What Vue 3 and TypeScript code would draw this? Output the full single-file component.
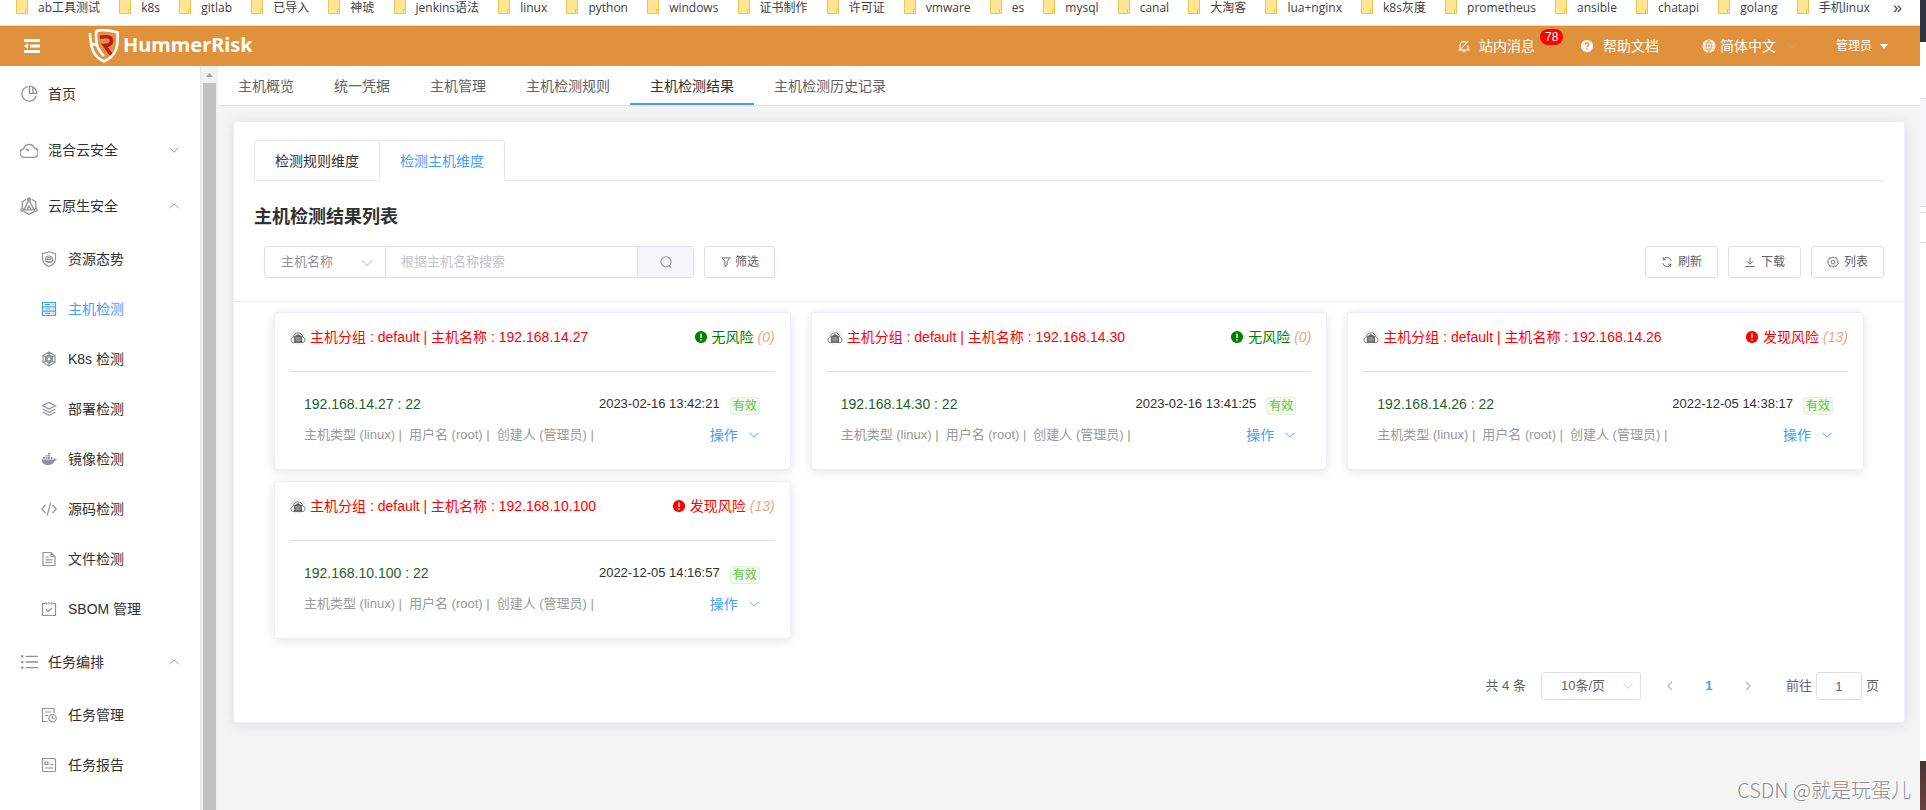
<script setup lang="ts">
import { ref } from 'vue'

interface Icon { stroke?: string; fill?: string }
interface MenuItem { label: string; icon: string; level: 1 | 2; arrow?: 'up' | 'down'; active?: boolean }
interface Host { ip: string; time: string; count: number }

const bookmarks = [
  'ab工具测试', 'k8s', 'gitlab', '已导入', '神琥', 'jenkins语法', 'linux', 'python', 'windows', '证书制作',
  '许可证', 'vmware', 'es', 'mysql', 'canal', '大淘客', 'lua+nginx', 'k8s灰度', 'prometheus', 'ansible',
  'chatapi', 'golang', '手机linux',
]

const icons: Record<string, Icon> = {
  pie: { stroke: 'M7 1.500a6.500 6.500 0 1 0 7.500 8M8.500 1v6.500H15A6.500 6.500 0 0 0 8.500 1zM11.500 2v5.500' },
  cloud: { stroke: 'M3.500 14.500a3.800 3.800 0 0 1-.3-7.500A5 5 0 0 1 12.700 6.200 4.200 4.200 0 0 1 12.500 14.500zM5 7.300a4 4 0 0 1 3 1.500' },
  native: { stroke: 'M5.500 2L2 4.500M10.500 2L14 4.500v6M2 4.500v6M3.500 13 8 15.500l4.500-2.500M8 2.500l4.500 9h-9zM8 .8a1.200 1.200 0 1 0 0 2.400A1.200 1.200 0 0 0 8 .8zM2 10.300a1.200 1.200 0 1 0 0 2.400 1.200 1.200 0 0 0 0-2.400zM14 10.300a1.200 1.200 0 1 0 0 2.400 1.200 1.200 0 0 0 0-2.400zM6 11.500 8 8l2 3.500' },
  shield: { stroke: 'M8 .8l6.500 2v5c0 3.700-2.700 6.300-6.500 7.700-3.800-1.400-6.500-4-6.500-7.700v-5zM4.500 8.500a3.500 3.500 0 0 1 7 0v1.500a5 5 0 0 1-7 0zM6 8.500a2 2 0 0 1 4 0zM6 10.500h4' },
  server: { stroke: 'M1.500 1.500h13v13h-13zM1.500 5.800h13M1.500 10.200h13M4 3.700h5M4 8h5M4 12.300h5M11.500 3.700h1M11.500 8h1M11.500 12.300h1' },
  k8s: { stroke: 'M8 1l6 3.500v7L8 15l-6-3.500v-7zM8 1v3M8 12v3M2 4.500 5 6M14 4.500 11 6M2 11.500 5 10M14 11.500 11 10', fill: 'M8 3.200l4.200 2.400v4.800L8 12.800l-4.200-2.400V5.600zM8 6.600a1.400 1.400 0 1 0 0 2.800 1.400 1.400 0 0 0 0-2.800z' },
  layers: { stroke: 'M8 1.500l6.500 3.300L8 8.100 1.500 4.800zM1.500 8L8 11.300 14.500 8M1.500 11L8 14.300l6.500-3.300' },
  docker: { fill: 'M.5 8.500h11.800c.7 0 1.200-.5 1.200-1.500.8.400 1 .8 1 1.300.6-.2 1.100 0 1.500.3-.6 1-1.300 1.200-2.300 1.200C12.500 12.800 10 14 7 14 3 14 .7 12 .5 8.500zM2 6h2v1.700H2zM4.500 6h2v1.700h-2zM7 6h2v1.700H7zM9.500 6h2v1.700h-2zM4.500 4h2v1.500h-2zM7 4h2v1.500H7zM7 2h2v1.500H7z' },
  code: { stroke: 'M4.500 4L.8 8l3.700 4M11.500 4l3.700 4-3.700 4M9.800 1.500l-3.600 13' },
  file: { stroke: 'M2 1.500h8l4 4v9H2zM10 1.500v4h4M4.500 6h3M4.500 8.800h7M4.500 11.500h7' },
  check: { stroke: 'M4 2.500H1.500v12h13v-12H12M5 1v2.500M8 1v2.500M11 1v2.500M5.500 2.500h1M9.500 2.500h1M5 8.500l2 2 4-3.500' },
  list: { stroke: 'M5 3H16M5 8H16M5 13H16', fill: 'M1 2h2v2H1zM1 7h2v2H1zM1 12h2v2H1z' },
  task: { stroke: 'M13 6V1.500H1.500v13h5M4 5h6M4 8.500h3M11.500 7.500a3.700 3.700 0 1 0 0 7.400 3.700 3.700 0 0 0 0-7.400zM11.300 9v2.500h2' },
  report: { stroke: 'M2.500 1.500h11a1 1 0 0 1 1 1v11a1 1 0 0 1-1 1h-11a1 1 0 0 1-1-1v-11a1 1 0 0 1 1-1zM4 5h3v2.500H4zM9 7.500h3M4 11h8' },
  filter: { stroke: 'M2 2.500h12M3 2.500l3.500 5V14M13 2.500l-3.500 5V12L6.500 14' },
  refresh: { stroke: 'M2.500 9.500A5.700 5.700 0 0 0 12.500 12M13.500 6.500A5.700 5.700 0 0 0 3.500 4M3 1.500V5h3.500M13 14.500V11H9.500' },
  download: { stroke: 'M8 2v8.500M4 7l4 4 4-4M1.500 14h13' },
  setting: { stroke: 'M8 1.200l2 1.300 2.500-.2.800 2.400L15 6.200 14.300 8l.7 2-1.800 1.400-.8 2.300-2.400-.2-2 1.300-2-1.300-2.400.2-.8-2.300L1 10l.7-2L1 6.200l1.700-1.500.8-2.400 2.500.2zM8 5.500l2.300 1.300v2.600L8 10.700 5.700 9.400V6.800z' },
  search: { stroke: 'M8 2a5.800 5.800 0 1 0 0 11.600A5.800 5.800 0 0 0 8 2zM11.500 12.500l2.500 2' },
  down: { stroke: 'M2 5L8 11l6-6' },
  up: { stroke: 'M2 11L8 5l6 6' },
  left: { stroke: 'M10.500 2.500l-5 5.500 5 5.500' },
  right: { stroke: 'M5.500 2.500l5 5.500-5 5.500' },
  bell: { stroke: 'M3.500 12V7.500C3.500 4.500 5.500 3 8 3c1.500 0 2.700.5 3.500 1.500M12.500 7v5M1.500 12.500h13M6.500 14.500h3M13 2L4 12' },
}

const menu: MenuItem[] = [
  { label: '首页', icon: 'pie', level: 1 },
  { label: '混合云安全', icon: 'cloud', level: 1, arrow: 'down' },
  { label: '云原生安全', icon: 'native', level: 1, arrow: 'up' },
  { label: '资源态势', icon: 'shield', level: 2 },
  { label: '主机检测', icon: 'server', level: 2, active: true },
  { label: 'K8s 检测', icon: 'k8s', level: 2 },
  { label: '部署检测', icon: 'layers', level: 2 },
  { label: '镜像检测', icon: 'docker', level: 2 },
  { label: '源码检测', icon: 'code', level: 2 },
  { label: '文件检测', icon: 'file', level: 2 },
  { label: 'SBOM 管理', icon: 'check', level: 2 },
  { label: '任务编排', icon: 'list', level: 1, arrow: 'up' },
  { label: '任务管理', icon: 'task', level: 2 },
  { label: '任务报告', icon: 'report', level: 2 },
]

const topTabs = ['主机概览', '统一凭据', '主机管理', '主机检测规则', '主机检测结果', '主机检测历史记录']
const activeTop = ref('主机检测结果')
const dimensions = ['检测规则维度', '检测主机维度']
const activeDimension = ref('检测主机维度')
const keyword = ref('')
const page = ref('1')

const tools = [
  { label: '刷新', icon: 'refresh' },
  { label: '下载', icon: 'download' },
  { label: '列表', icon: 'setting' },
]

const hosts: Host[] = [
  { ip: '192.168.14.27', time: '2023-02-16 13:42:21', count: 0 },
  { ip: '192.168.14.30', time: '2023-02-16 13:41:25', count: 0 },
  { ip: '192.168.14.26', time: '2022-12-05 14:38:17', count: 13 },
  { ip: '192.168.10.100', time: '2022-12-05 14:16:57', count: 13 },
]
</script>

<template>
  <div class="screen">
    <div class="window">
      <nav class="bookmarks" aria-label="书签">
        <div class="bookmark-list">
          <a v-for="b in bookmarks" :key="b" href="#" class="bookmark">
            <svg class="folder" viewBox="0 0 12 14" aria-hidden="true">
              <path d="M.5-1h11v14.500H.5z" fill="#ffe694" stroke="#ebc54c" />
              <path d="M9.500 9.500h2v4h-2z" fill="#fff0b8" stroke="#ebc54c" />
            </svg>{{ b }}
          </a>
        </div>
        <a href="#" class="more" aria-label="更多书签">»</a>
      </nav>

      <header class="header">
        <button class="collapse" type="button" aria-label="收起菜单">
          <svg viewBox="0 0 16 14" aria-hidden="true"><path d="M0 0h16v3H0zM6 5.500h10v3H6zM0 11h16v3H0zM0 7l4-3v6z" fill="#fff" /></svg>
        </button>
        <a href="#" class="brand">
          <svg class="logo" viewBox="0 0 32 34" aria-hidden="true">
            <path d="M8.500 1.800C13 .8 20 .8 29.500 3.500 30.500 17 28.500 27 16 32.300 7 28.500 2.500 22 2 4" fill="none" stroke="#fff" stroke-width="2.600" />
            <path d="M8.300 1.500c-.8 10-.3 18 7.700 25.500M2.500 14.500l6 1.500" fill="none" stroke="#fff" stroke-width="2.600" />
            <path d="M12 8.500c6-1.800 12-1 11.500 3.500-.3 3-3.500 4.500-7 4.500l6.500 9" fill="none" stroke="#c1161c" stroke-width="3.400" />
          </svg>
          <span>HummerRisk</span>
        </a>
        <div class="header-right">
          <a href="#" class="hlink notice">
            <svg class="i14" viewBox="0 0 16 16" aria-hidden="true"><path :d="icons.bell.stroke" class="line" /></svg>
            站内消息<span class="count">78</span>
          </a>
          <a href="#" class="hlink help">
            <svg class="i14" viewBox="0 0 16 16" aria-hidden="true">
              <circle cx="8" cy="8" r="7" fill="#fff" />
              <path d="M5.800 6.200c.2-3 4.600-2.700 4.400 0C10 7.800 8 7.700 8 9.500M8 10.700v1.500" fill="none" stroke="#df913c" stroke-width="1.500" />
            </svg>
            帮助文档
          </a>
          <button type="button" class="hlink lang">
            <svg class="i14" viewBox="0 0 16 16" aria-hidden="true">
              <circle cx="8" cy="8" r="7.500" fill="#fff" />
              <path d="M8 1v14M1 8h14M2.500 4.500h11M2.500 11.500h11M8 1C4 5 4 11 8 15M8 1c4 4 4 10 0 14" fill="none" stroke="#df913c" stroke-width=".8" />
            </svg>
            简体中文
            <svg class="i12 faint" viewBox="0 0 16 16" aria-hidden="true"><path :d="icons.down.stroke" class="line" /></svg>
          </button>
          <button type="button" class="hlink user">
            管理员<svg class="caret" viewBox="0 0 8 5" aria-hidden="true"><path d="M0 0h8L4 5z" fill="#fff" /></svg>
          </button>
        </div>
      </header>

      <div class="body">
        <aside class="sidebar">
          <nav class="menu" aria-label="主菜单">
            <a v-for="m in menu" :key="m.label" href="#" :class="['item', 'level' + m.level, { active: m.active }]">
              <svg class="menu-icon" viewBox="0 0 16 16" aria-hidden="true">
                <path v-if="icons[m.icon].stroke" :d="icons[m.icon].stroke" class="line" />
                <path v-if="icons[m.icon].fill" :d="icons[m.icon].fill" class="solid" />
              </svg>
              <span class="label">{{ m.label }}</span>
              <svg v-if="m.arrow" class="i12 arrow" viewBox="0 0 16 16" aria-hidden="true"><path :d="icons[m.arrow].stroke" class="line" /></svg>
            </a>
          </nav>
          <div class="scrollbar" aria-hidden="true">
            <svg viewBox="0 0 17 16"><path d="M5 10.500h7L8.500 6.500z" fill="#a3a3a3" /></svg>
            <div class="thumb"></div>
          </div>
        </aside>

        <main class="main">
          <nav class="top-tabs" aria-label="主机检测">
            <a v-for="t in topTabs" :key="t" href="#" :class="['top-tab', { active: t === activeTop }]" @click.prevent="activeTop = t">{{ t }}</a>
          </nav>

          <section class="panel">
            <div class="dims" role="tablist">
              <button v-for="d in dimensions" :key="d" type="button" role="tab" :aria-selected="d === activeDimension" :class="['dim', { active: d === activeDimension }]" @click="activeDimension = d">{{ d }}</button>
              <span class="dims-rest"></span>
            </div>
            <h1 class="title">主机检测结果列表</h1>

            <div class="toolbar">
              <div class="search">
                <div class="select-box field">
                  <select aria-label="搜索字段"><option>主机名称</option></select>
                  <svg class="i14 chevron" viewBox="0 0 16 16" aria-hidden="true"><path :d="icons.down.stroke" class="line" /></svg>
                </div>
                <input v-model="keyword" class="keyword" type="text" aria-label="搜索内容" placeholder="根据主机名称搜索">
                <button type="button" class="search-btn" aria-label="搜索">
                  <svg class="i14" viewBox="0 0 16 16" aria-hidden="true"><path :d="icons.search.stroke" class="line" /></svg>
                </button>
              </div>
              <button type="button" class="btn filter">
                <svg class="i12" viewBox="0 0 16 16" aria-hidden="true"><path :d="icons.filter.stroke" class="line" /></svg>筛选
              </button>
              <div class="tools">
                <button v-for="t in tools" :key="t.label" type="button" class="btn">
                  <svg class="i12" viewBox="0 0 16 16" aria-hidden="true"><path :d="icons[t.icon].stroke" class="line" /></svg>{{ t.label }}
                </button>
              </div>
            </div>

            <div class="grid">
              <article v-for="h in hosts" :key="h.ip" class="card">
                <div class="card-head">
                  <svg class="host-icon" viewBox="0 0 16 16" aria-hidden="true">
                    <circle cx="8" cy="8" r="8" fill="#f0f0f0" />
                    <path d="M3.500 13.500C.5 13.500 0 9 3.500 8 3.500 2.500 12.500 2.500 12.500 8c3.500 1 3 5.500 0 5.500z" fill="#fff" stroke="#777" />
                    <path d="M4 7.500 8 5l4 2.500v6H4z" fill="#666" />
                    <path d="M5 9h6M5 11h6M7 8v5M9 8v5" stroke="#bbb" stroke-width=".6" />
                  </svg>
                  <span class="host-name">主机分组 : default | 主机名称 : {{ h.ip }}</span>
                  <span :class="['risk', h.count ? 'bad' : 'good']">
                    <svg class="i14" viewBox="0 0 16 16" aria-hidden="true"><circle cx="8" cy="8" r="7" class="solid" /><path d="M8 4v5M8 10.500v1.700" stroke="#fff" stroke-width="1.600" /></svg>
                    {{ h.count ? '发现风险' : '无风险' }} <i>({{ h.count }})</i>
                  </span>
                </div>
                <div class="card-body">
                  <div class="row first">
                    <span class="ip">{{ h.ip }} : 22</span>
                    <time>{{ h.time }}</time>
                    <span class="tag">有效</span>
                  </div>
                  <div class="row second">
                    <span>主机类型 (linux) |</span>
                    <span>用户名 (root) |</span>
                    <span>创建人 (管理员) |</span>
                    <button type="button" class="action">操作
                      <svg class="i12" viewBox="0 0 16 16" aria-hidden="true"><path :d="icons.down.stroke" class="line" /></svg>
                    </button>
                  </div>
                </div>
              </article>
            </div>

            <div class="pager">
              <span class="total">共 4 条</span>
              <div class="select-box size">
                <select aria-label="每页条数"><option>10条/页</option></select>
                <svg class="i12 chevron" viewBox="0 0 16 16" aria-hidden="true"><path :d="icons.down.stroke" class="line" /></svg>
              </div>
              <button type="button" class="page-btn" aria-label="上一页" disabled><svg class="i12" viewBox="0 0 16 16" aria-hidden="true"><path :d="icons.left.stroke" class="line bold" /></svg></button>
              <button type="button" class="page-btn current">1</button>
              <button type="button" class="page-btn" aria-label="下一页" disabled><svg class="i12" viewBox="0 0 16 16" aria-hidden="true"><path :d="icons.right.stroke" class="line bold" /></svg></button>
              <label class="jump">前往<input v-model="page" type="text">页</label>
            </div>
          </section>
        </main>
      </div>
    </div>
    <div class="edge" aria-hidden="true">
      <div class="e-dark"></div><div class="e-white"></div><div class="e-gray"></div>
      <div class="e-gap"></div><div class="e-row"></div><div class="e-fill"></div><div class="e-brown"></div>
    </div>
    <div class="watermark">CSDN @就是玩蛋儿</div>
  </div>
</template>

<style>
body { margin: 0; }
</style>

<style scoped>
* { box-sizing: border-box; }
.screen {
  position: relative; display: flex; min-height: 100vh; color: #303133; background: #fff;
  font: 14px/20px "Liberation Sans", "Noto Sans CJK SC", sans-serif;
}
a { color: inherit; text-decoration: none; }
button, input, select { font: inherit; color: inherit; }
button { margin: 0; padding: 0; border: 0; background: none; cursor: pointer; }
svg { display: block; flex: none; }
.line { fill: none; stroke: currentColor; stroke-width: 1.2; }
.line.bold { stroke-width: 2; }
.solid { fill: currentColor; fill-rule: evenodd; }
.i14 { width: 14px; height: 14px; }
.i12 { width: 12px; height: 12px; }
.window { flex: 1; min-width: 0; display: flex; flex-direction: column; }

.bookmarks {
  display: flex; align-items: flex-start; height: 26px; padding: 0 18px 0 16px; border-bottom: 1px solid #dadce0;
  font: 12px/16px "Open Sans", "Noto Sans CJK SC", sans-serif; color: #3c4043;
}
.bookmark-list { flex: 1; display: flex; justify-content: space-between; }
.bookmark { display: flex; gap: 10px; white-space: nowrap; }
.folder { width: 12px; height: 14px; }
.more { margin-left: 23px; font-size: 16px; line-height: 16px; font-family: "Liberation Sans", sans-serif; }

.header { display: flex; align-items: center; height: 40px; padding: 0 32px 0 24px; background: #df913c; color: #fff; }
.collapse svg { width: 16px; height: 14px; }
.brand { display: flex; align-items: center; gap: 3px; margin-left: 48px; }
.logo { width: 32px; height: 34px; }
.brand span { font: bold 20px/32px "Noto Sans", sans-serif; padding-bottom: 2px; }
.header-right { display: flex; align-items: center; margin-left: auto; }
.hlink { display: flex; align-items: center; white-space: nowrap; }
.notice { position: relative; gap: 8px; margin-right: 45px; }
.count {
  position: absolute; left: 83px; top: -7px; height: 16px; padding: 0 5px; border-radius: 8px;
  background: #f00; font-size: 12px; line-height: 16px;
}
.help { gap: 9px; margin-right: 43px; }
.lang { gap: 4px; margin-right: 38px; }
.faint { margin-left: 6px; color: #c0a483; }
.user { gap: 8px; font-size: 12px; }
.caret { width: 8px; height: 5px; }

.body { flex: 1; display: flex; }
.sidebar { display: flex; flex: none; width: 218px; }
.menu { flex: 1; border-right: 1px solid #e6e6e6; }
.item { display: flex; align-items: center; padding: 0 20px; }
.level1 { height: 56px; }
.level2 { height: 50px; padding-left: 41px; }
.menu-icon { width: 16px; height: 16px; margin-right: 11px; color: #909399; }
.level1 .menu-icon { width: 18px; height: 18px; margin-right: 10px; }
.active .menu-icon { color: #409eff; }
.item.active { color: #409eff; }
.arrow { margin-left: auto; color: #909399; }
.scrollbar { display: flex; flex-direction: column; width: 17px; background: #f1f1f1; }
.scrollbar svg { width: 17px; height: 17px; }
.thumb { flex: 1; margin: 0 2px; background: #c1c1c1; }

.main { flex: 1; min-width: 0; background: #f4f4f4; }
.top-tabs { display: flex; height: 40px; border-bottom: 1px solid #e4e4e4; background: #fff; }
.top-tab { height: 39px; padding: 0 20px; line-height: 40px; color: #606266; }
.top-tab.active { border-bottom: 2px solid #409eff; color: #303133; }

.panel {
  margin: 15px 15px 0 15px; border: 1px solid #ebeef5; border-radius: 4px; background: #fff;
  box-shadow: 0 2px 12px rgba(0, 0, 0, .1);
}
.dims { display: flex; padding: 18px 20px 0 20px; }
.dim { height: 41px; padding: 0 20px; border: 1px solid #e4e7ed; border-top-left-radius: 4px; }
.dim.active { border-left: 0; border-bottom-color: #fff; border-radius: 0 4px 0 0; color: #409eff; }
.dims-rest { flex: 1; border-bottom: 1px solid #e4e7ed; }
.title { margin: 23px 20px 16px; font-size: 18px; line-height: 26px; }
.toolbar { display: flex; align-items: center; padding: 0 20px 23px 30px; border-bottom: 1px solid #ebeef5; }
.search { display: flex; height: 32px; width: 430px; border: 1px solid #dcdfe6; border-radius: 4px; font-size: 13px; overflow: hidden; }
.select-box { position: relative; }
.select-box select { width: 100%; height: 100%; padding: 0 16px; border: 0; background: transparent; appearance: none; }
.chevron { position: absolute; right: 11px; top: 50%; margin-top: -6px; color: #c0c4cc; pointer-events: none; }
.field { width: 121px; border-right: 1px solid #dcdfe6; color: #909399; }
.keyword { flex: 1; min-width: 0; padding: 0 15px; border: 0; outline: 0; }
.keyword::placeholder { color: #c0c4cc; opacity: 1; }
.search-btn { display: flex; align-items: center; justify-content: center; width: 56px; border-left: 1px solid #dcdfe6; background: #f5f7fa; color: #909399; }
.btn {
  display: flex; align-items: center; gap: 5px; height: 32px; padding: 0 15px; border: 1px solid #dcdfe6;
  border-radius: 3px; font-size: 12px; color: #606266; background: #fff; white-space: nowrap;
}
.filter { gap: 3px; margin-left: 10px; }
.tools { display: flex; gap: 10px; margin-left: auto; }

.grid { display: grid; grid-template-columns: repeat(3, minmax(0, 1fr)); gap: 11px 20px; padding: 10px 40px 0; }
.card { padding: 0 15px; border: 1px solid #ebeef5; border-radius: 4px; background: #fff; box-shadow: 0 2px 12px rgba(0, 0, 0, .1); }
.card-head { display: flex; align-items: center; height: 59px; padding-bottom: 10px; border-bottom: 1px solid #dcdfdf; }
.host-icon { width: 16px; height: 16px; margin-right: 4px; }
.host-name { color: #f00; white-space: nowrap; }
.risk { display: flex; align-items: center; gap: 4px; margin-left: auto; white-space: nowrap; }
.risk i { color: #e9a880; }
.good { color: #008000; }
.bad { color: #f00; }
.card-body { padding: 16px 15px 19px 14px; }
.row { display: flex; align-items: center; white-space: nowrap; }
.first { height: 32px; }
.ip { color: #1f5f2b; }
time { margin-left: auto; font-size: 13px; }
.tag { margin: 4px 0 0 10px; padding: 0 2px; border: 1px solid #e1f3d8; border-radius: 3px; background: #f0f9eb; color: #67c23a; font-size: 12px; line-height: 16px; }
.second { height: 30px; gap: 7px; font-size: 13px; color: #999; }
.action { display: flex; align-items: center; gap: 10px; margin-left: auto; font-size: 14px; color: #409eff; }

.pager { display: flex; align-items: center; justify-content: flex-end; height: 83px; padding: 11px 25px 0 0; font-size: 13px; color: #606266; }
.total { margin-right: 15px; }
.size { width: 100px; height: 28px; margin-right: 14px; border: 1px solid #dcdfe6; border-radius: 3px; }
.size select { padding: 0 19px; }
.size .chevron { right: 6px; }
.page-btn { display: flex; align-items: center; justify-content: center; width: 30px; height: 28px; margin-right: 9px; color: #c0c4cc; }
.page-btn.current { color: #409eff; font-weight: bold; }
.jump { display: flex; align-items: center; gap: 4px; margin-left: 14px; }
.jump input { width: 46px; height: 28px; padding: 0; border: 1px solid #dcdfe6; border-radius: 3px; text-align: center; }

.edge { flex: none; display: flex; flex-direction: column; width: 6px; }
.e-dark { height: 42px; background: #2f3241; }
.e-white { height: 56px; }
.e-gray { height: 108px; border-top: 1px solid #ddd; background: #f5f6f8; }
.e-gap { height: 6px; border-top: 1px solid #ddd; }
.e-row { height: 31px; border: 1px solid #ddd; border-width: 1px 0; }
.e-fill { flex: 1; }
.e-brown { height: 49px; background: linear-gradient(#483535, #6b4040); }
.watermark {
  position: absolute; right: 15px; bottom: 6px; font: 300 20px/28px "Noto Sans CJK SC", sans-serif; color: #8e8e8e;
  text-shadow: -1px -1px 0 #fff; pointer-events: none;
}
</style>
